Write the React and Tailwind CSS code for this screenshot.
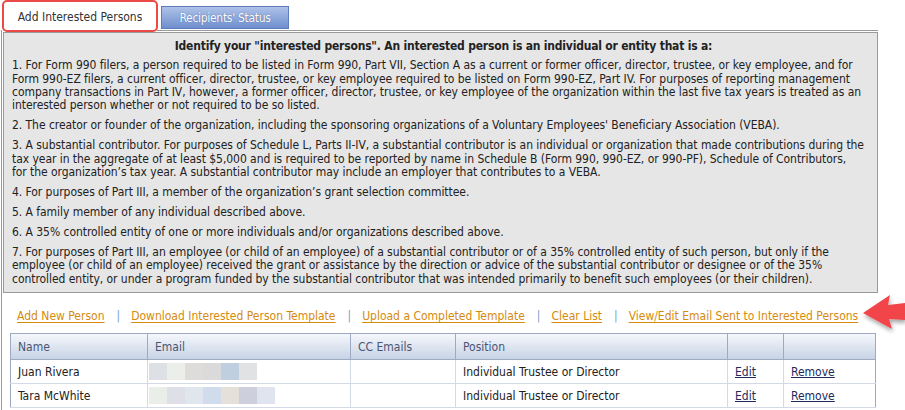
import React from "react";

const F = { fontFamily: '"DejaVu Sans Condensed", "DejaVu Sans", sans-serif' };

const paras = [
  [
    "1. For Form 990 filers, a person required to be listed in Form 990, Part VII, Section A as a current or former officer, director, trustee, or key employee, and for",
    "Form 990-EZ filers, a current officer, director, trustee, or key employee required to be listed on Form 990-EZ, Part IV. For purposes of reporting management",
    "company transactions in Part IV, however, a former officer, director, trustee, or key employee of the organization within the last five tax years is treated as an",
    "interested person whether or not required to be so listed.",
  ],
  [
    "2. The creator or founder of the organization, including the sponsoring organizations of a Voluntary Employees' Beneficiary Association (VEBA).",
  ],
  [
    "3. A substantial contributor. For purposes of Schedule L, Parts II-IV, a substantial contributor is an individual or organization that made contributions during the",
    "tax year in the aggregate of at least $5,000 and is required to be reported by name in Schedule B (Form 990, 990-EZ, or 990-PF), Schedule of Contributors,",
    "for the organization\u2019s tax year. A substantial contributor may include an employer that contributes to a VEBA.",
  ],
  ["4. For purposes of Part III, a member of the organization\u2019s grant selection committee."],
  ["5. A family member of any individual described above."],
  ["6. A 35% controlled entity of one or more individuals and/or organizations described above."],
  [
    "7. For purposes of Part III, an employee (or child of an employee) of a substantial contributor or of a 35% controlled entity of such person, but only if the",
    "employee (or child of an employee) received the grant or assistance by the direction or advice of the substantial contributor or designee or of the 35%",
    "controlled entity, or under a program funded by the substantial contributor that was intended primarily to benefit such employees (or their children).",
  ],
];

const links = [
  "Add New Person",
  "Download Interested Person Template",
  "Upload a Completed Template",
  "Clear List",
  "View/Edit Email Sent to Interested Persons",
];

const mosaic1 = ["#dde0e5", "#eceeea", "#dedcdb", "#d9dad9", "#c0cfe0", "#e1e2e4"];
const mosaic2 = ["#eaeee8", "#dfdfe8", "#e0e6ee", "#d0dceb", "#e6e0da", "#cdd0dc", "#e0e4ee"];

function Mosaic({ colors }) {
  return (
    <div className="flex h-[17px]">
      {colors.map((c, i) => (
        <div key={i} className="w-[18px] h-full" style={{ background: c }} />
      ))}
    </div>
  );
}

export default function App() {
  return (
    <div className="w-[905px] h-[410px] bg-white relative overflow-hidden text-[#222]" style={F}>
      {/* Tabs */}
      <div className="flex items-end h-[30px] pl-[6px]">
        <div className="relative w-[148px] h-[27px] bg-white flex items-center justify-center text-[12px] text-[#333]">
          Add Interested Persons
          <div className="absolute left-[-4px] top-[-3px] w-[156px] h-[32px] border-2 border-[#ea4a45] rounded-[5px]" />
        </div>
        <div className="ml-[7px] mb-[1px] w-[128px] h-[23px] flex items-center justify-center text-[12px] tracking-[-0.3px] text-white border border-[#5d7cbd] bg-gradient-to-b from-[#aec2e8] to-[#6f8fcd] [text-shadow:0_0_1px_#3a5a9a]">
          Recipients' Status
        </div>
      </div>

      {/* Panel */}
      <div className="ml-[1px] w-[877px] h-[380px] border-l border-[#9a9a9a] relative">
        <div className="absolute left-[155px] right-0 top-0 border-t border-[#9a9a9a]" />
        <div className="pt-[2px] pl-[1px]">
          <div className="h-[261px] bg-[#e6e6e6] border border-[#9a9a9a] pl-[8px] pt-[7px] text-[12px] leading-[13.33px] tracking-[-0.05px]">
            <div className="text-center font-bold text-[#222] pr-[2px] mb-[6px] tracking-[-0.2px]">
              Identify your "interested persons". An interested person is an individual or entity that is a:
            </div>
            <div className="flex flex-col gap-[6.67px]">
              {paras.map((p, i) => (
                <div key={i} className="whitespace-nowrap">
                  {p.map((l, j) => (
                    <div key={j}>{l}</div>
                  ))}
                </div>
              ))}
            </div>
          </div>
        </div>

        {/* Links */}
        <div className="flex items-center h-[20px] mt-[13px] pl-[15px] text-[12px] whitespace-nowrap">
          {links.map((l, i) => (
            <React.Fragment key={i}>
              {i > 0 && <span className="ml-[12px] mr-[11px] text-[#7a9ccc]">|</span>}
              <span className="text-[#d68a0c] underline underline-offset-2">{l}</span>
            </React.Fragment>
          ))}
        </div>

        {/* Table */}
        <div className="ml-[8px] mt-[7px] w-[865px]">
          <table className="w-full border-collapse text-[12px] table-fixed">
            <colgroup>
              <col className="w-[137px]" />
              <col className="w-[203px]" />
              <col className="w-[105px]" />
              <col className="w-[272px]" />
              <col className="w-[56px]" />
              <col className="w-[92px]" />
            </colgroup>
            <thead>
              <tr className="h-[26px] bg-gradient-to-b from-[#f5f7fb] to-[#c6d2e5] text-[#4a5573]">
                {["Name", "Email", "CC Emails", "Position", "", ""].map((h, i) => (
                  <th key={i} className="border border-[#9daac2] text-left font-normal px-[7px]">
                    {h}
                  </th>
                ))}
              </tr>
            </thead>
            <tbody className="text-[#222]">
              {[
                ["Juan Rivera", mosaic1],
                ["Tara McWhite", mosaic2],
              ].map(([n, m], i) => (
                <tr key={i} className="h-[24px]">
                  <td className="border border-[#d3dae5] border-l-[#9daac2] px-[7px]">{n}</td>
                  <td className="border border-[#d3dae5] px-[1px]">
                    <Mosaic colors={m} />
                  </td>
                  <td className="border border-[#d3dae5]"></td>
                  <td className="border border-[#d3dae5] px-[7px]">Individual Trustee or Director</td>
                  <td className="border border-[#d3dae5] px-[7px]">
                    <span className="text-[#1d2a5c] underline">Edit</span>
                  </td>
                  <td className="border border-[#d3dae5] border-r-[#9daac2] px-[7px]">
                    <span className="text-[#1d2a5c] underline">Remove</span>
                  </td>
                </tr>
              ))}
            </tbody>
          </table>
        </div>
      </div>

      {/* Red arrow */}
      <svg className="absolute left-[858px] top-[292px]" width="47" height="42" viewBox="0 0 47 42">
        <defs>
          <filter id="sh" x="-20%" y="-20%" width="150%" height="160%">
            <feDropShadow dx="1" dy="3" stdDeviation="2" floodColor="#000" floodOpacity="0.35" />
          </filter>
        </defs>
        <polygon points="5,21 32,3 30,13 47,11 47,28 31,27 34,37" fill="#f2444a" filter="url(#sh)" />
      </svg>
    </div>
  );
}
